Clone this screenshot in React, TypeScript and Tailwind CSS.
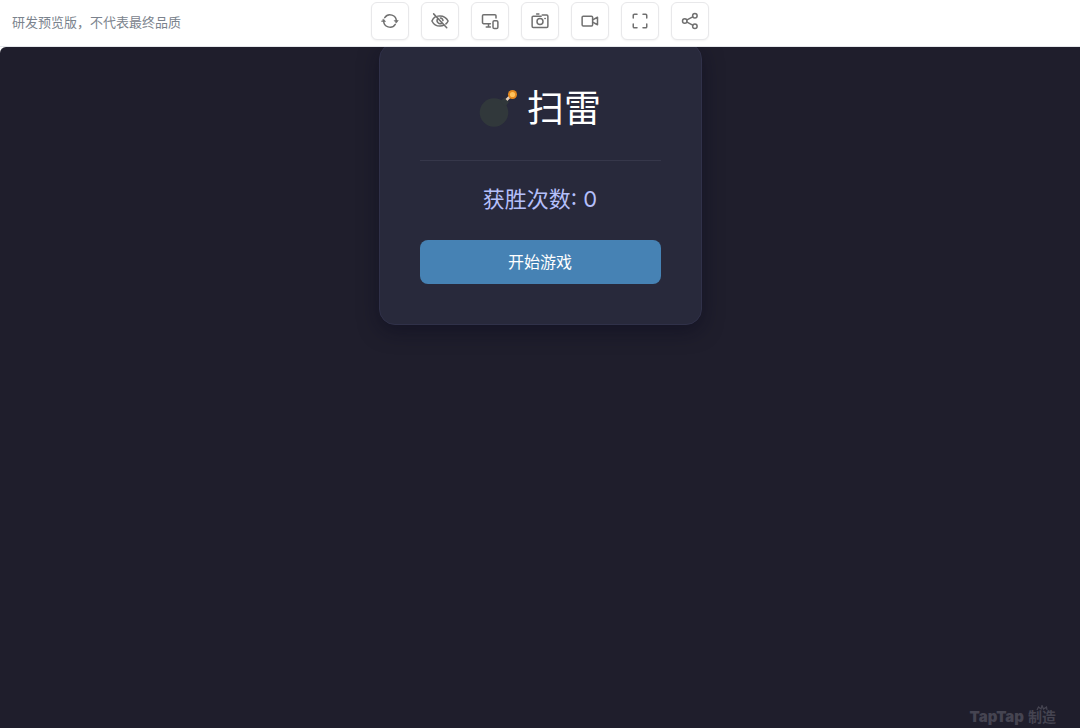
import type { ReactNode } from "react";

type Tool = { label: string; icon: ReactNode };

const tools: Tool[] = [
  {
    label: "刷新",
    icon: (
      <>
        <path d="M5 7.500A8.400 8.400 0 0 1 20.400 12.500M19 16.500A8.400 8.400 0 0 1 3.600 11.500" />
        <path d="M18 11.300h5l-2.500 3.200zM1 12.700h5L3.500 9.500z" fill="currentColor" strokeWidth={0.8} />
      </>
    ),
  },
  {
    label: "隐藏",
    icon: (
      <>
        <path d="M6 6.200C3.800 7.600 2 10 1.200 12c2 4 5.800 6.800 10.800 6.800 2 0 3.800-.4 5.400-1.200M9 5.500c1-.2 2-.3 3-.3 5 0 8.800 2.800 10.800 6.800-.7 1.500-1.600 2.700-2.900 3.900" />
        <path d="M8.800 9.200a4.200 4.200 0 0 0 5.800 5.800M12.500 8a4 4 0 0 1 3.500 3.500M3.500 2.500l17.500 18.500" />
      </>
    ),
  },
  {
    label: "切换设备",
    icon: (
      <>
        <path d="M12.500 15.500h-9A1.500 1.500 0 0 1 2 14V5a1.500 1.500 0 0 1 1.500-1.500h15A1.500 1.500 0 0 1 20 5v3M7 20h5.500M10 15.500V20" />
        <rect x="16" y="11.500" width="6.500" height="10.500" rx="1.800" />
      </>
    ),
  },
  {
    label: "截图",
    icon: (
      <>
        <path d="M7.500 2.500h3" />
        <path d="M3 5.500h10.500M15 4h6A1.500 1.500 0 0 1 22.500 5.500V19a1.500 1.500 0 0 1-1.500 1.500H3A1.500 1.500 0 0 1 1.500 19V7A1.500 1.500 0 0 1 3 5.500" />
        <circle cx="12" cy="12.800" r="4" />
        <path d="M18.500 8.500h.5" />
      </>
    ),
  },
  {
    label: "录像",
    icon: (
      <>
        <rect x="1.500" y="5.500" width="14" height="13" rx="1.500" />
        <path d="m15.500 10.500 6.500-3.500v10l-6.500-3.500" />
      </>
    ),
  },
  {
    label: "全屏",
    icon: (
      <path d="M8 3H4.500A1.500 1.500 0 0 0 3 4.500V8M16 3h3.500A1.500 1.500 0 0 1 21 4.500V8M8 21H4.500A1.500 1.500 0 0 1 3 19.500V16M16 21h3.500a1.500 1.500 0 0 0 1.500-1.500V16" />
    ),
  },
  {
    label: "分享",
    icon: (
      <>
        <circle cx="5" cy="12" r="3" />
        <circle cx="18.500" cy="5" r="3" />
        <circle cx="18.500" cy="19" r="3" />
        <path d="m8 10.500 7.600-4M8 13.500l7.600 4" />
      </>
    ),
  },
];

function Toolbar() {
  return (
    <header className="grid h-[47px] shrink-0 grid-cols-[1fr_auto_1fr] items-start border-b border-gray-200 bg-white px-3">
      <p className="pt-[11px] text-[13px] leading-[22px] text-[#7b838d]">研发预览版，不代表最终品质</p>
      <div className="flex gap-3 pt-[2px]">
        {tools.map((tool) => (
          <button
            key={tool.label}
            type="button"
            aria-label={tool.label}
            className="flex size-[38px] items-center justify-center rounded-md border border-[#e8e8ea] bg-white text-[#707070] shadow-xs"
          >
            <svg viewBox="0 0 24 24" className="size-[18px]" fill="none" stroke="currentColor" strokeWidth={2} strokeLinecap="round" strokeLinejoin="round">
              {tool.icon}
            </svg>
          </button>
        ))}
      </div>
    </header>
  );
}

function Bomb() {
  return (
    <svg viewBox="0 0 40 40" className="size-10" aria-hidden="true">
      <circle cx="15" cy="23.500" r="14.300" fill="#31383b" />
      <path d="m21 12 5-3.500 4 4.500-4 5z" fill="#31383b" />
      <path d="m27.500 11 3-3" stroke="#e2cdb9" strokeWidth="2.600" />
      <circle cx="33.500" cy="5.500" r="4.500" fill="#e58a1f" />
      <circle cx="33.500" cy="5.500" r="2.600" fill="#ffc25c" />
    </svg>
  );
}

export default function App() {
  return (
    <div className="flex min-h-screen flex-col bg-white font-['Inter','Noto_Sans_CJK_SC',sans-serif]">
      <Toolbar />
      <main className="relative flex flex-1 flex-col items-center overflow-hidden rounded-tl-md bg-[#1f1e2c]">
        <section className="-mt-1 w-full max-w-[323px] rounded-2xl border border-[#303149] bg-[#28293b] p-10 shadow-[0_6px_20px_rgba(10,10,30,0.5)]">
          <h1 className="flex items-center justify-center gap-2 border-b border-[#36374a] pt-[2px] pb-7 text-[37px] leading-[46px] text-white">
            <Bomb />
            扫雷
          </h1>
          <p className="pt-[22px] pb-6 text-center text-[22px] leading-[33px] text-[#b4bffa]">获胜次数: 0</p>
          <button type="button" className="h-11 w-full rounded-lg bg-[#4682b4] text-base text-white">
            开始游戏
          </button>
        </section>
        <footer className="absolute right-6 bottom-0 flex items-center gap-1 text-[14px] leading-[22px] font-bold text-[#454451]">
          <span className="text-[15px] font-black">TapTap</span>
          <span className="relative">
            制造
            <svg viewBox="0 0 12 6" className="absolute -top-px right-2 h-1.5 w-3" fill="none" stroke="currentColor" strokeWidth="1.200" aria-hidden="true">
              <path d="M1 5 2.500 2 5 4 6 .5 7.500 4l3-2L11 5" />
            </svg>
          </span>
        </footer>
      </main>
    </div>
  );
}
